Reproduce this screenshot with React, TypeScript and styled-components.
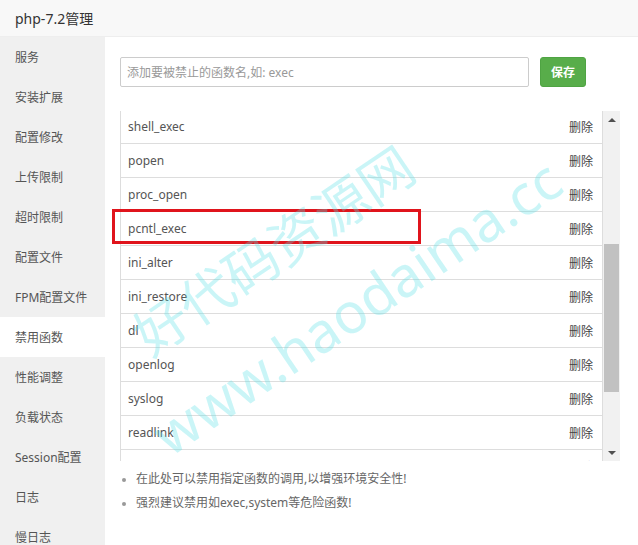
import { useEffect, useRef } from 'react';
import styled, { createGlobalStyle } from 'styled-components';

const ROW_HEIGHT = 34;
const VIEWPORT_HEIGHT = 350;
const ARROW_SIZE = 17;

const functions = [
  'passthru',
  'exec',
  'system',
  'putenv',
  'chroot',
  'chgrp',
  'chown',
  'proc_get_status',
  'shell_exec',
  'popen',
  'proc_open',
  'pcntl_exec',
  'ini_alter',
  'ini_restore',
  'dl',
  'openlog',
  'syslog',
  'readlink',
  'symlink',
  'popepassthru',
  'stream_socket_server',
  'fsocket',
];

const menu = [
  '服务',
  '安装扩展',
  '配置修改',
  '上传限制',
  '超时限制',
  '配置文件',
  'FPM配置文件',
  '禁用函数',
  '性能调整',
  '负载状态',
  'Session配置',
  '日志',
  '慢日志',
];

const GlobalStyle = createGlobalStyle`
  html, body {
    margin: 0;
    padding: 0;
    background: #fff;
  }
  body {
    font-family: "Noto Sans", "Noto Sans CJK SC", sans-serif;
    font-size: 12px;
    color: #555;
  }
  * {
    box-sizing: border-box;
  }
`;

const Window = styled.div`
  position: relative;
  width: 638px;
  height: 545px;
  overflow: hidden;
  display: flex;
  flex-direction: column;
  background: #fff;
`;

const Header = styled.div`
  height: 37px;
  flex: none;
  display: flex;
  align-items: center;
  padding: 0 15px 1px;
  background: #f8f8f8;
  border-bottom: 1px solid #eee;
  color: #333;
  font-size: 14px;
`;

const Body = styled.div`
  flex: 1;
  display: flex;
  min-height: 0;
`;

const Sidebar = styled.ul`
  width: 105px;
  flex: none;
  margin: 0;
  padding: 0;
  list-style: none;
  background: #f0f0f0;
`;

const MenuItem = styled.li<{ $active?: boolean }>`
  height: 40px;
  display: flex;
  align-items: center;
  padding-left: 15px;
  background: ${(p) => (p.$active ? '#fff' : 'transparent')};
  color: #555;
  white-space: nowrap;
`;

const Main = styled.div`
  flex: 1;
  padding: 20px 18px 0 15px;
  display: flex;
  flex-direction: column;
`;

const Toolbar = styled.div`
  display: flex;
  align-items: center;
  gap: 11px;
`;

const Input = styled.input`
  width: 409px;
  height: 30px;
  padding: 0 6px;
  border: 1px solid #ccc;
  border-radius: 2px;
  font: inherit;
  color: #555;
  outline: none;

  &::placeholder {
    color: #999;
  }
`;

const SaveButton = styled.button`
  width: 46px;
  height: 30px;
  border: 1px solid #4fa443;
  border-radius: 3px;
  background: #58ad4a;
  color: #fff;
  font: inherit;
  font-weight: 700;
  padding: 0;
`;

const ListViewport = styled.div`
  margin-top: 24px;
  width: 500px;
  height: ${VIEWPORT_HEIGHT}px;
  display: flex;
`;

const ListScroll = styled.div`
  flex: 1;
  overflow: hidden;
`;

const Table = styled.div`
  border: 1px solid #ddd;
  border-bottom: none;
`;

const Row = styled.div`
  height: ${ROW_HEIGHT}px;
  display: flex;
  align-items: center;
  justify-content: space-between;
  padding: 0 9px 0 7px;
  border-bottom: 1px solid #ddd;
  color: #555;
`;

const DeleteLink = styled.a`
  color: #444;
  cursor: pointer;
`;

const Scrollbar = styled.div`
  width: 17px;
  flex: none;
  display: flex;
  flex-direction: column;
  background: #f1f1f1;
`;

const ArrowButton = styled.div<{ $down?: boolean }>`
  height: ${ARROW_SIZE}px;
  flex: none;
  display: flex;
  align-items: center;
  justify-content: center;

  &::before {
    content: '';
    width: 0;
    height: 0;
    border-left: 4px solid transparent;
    border-right: 4px solid transparent;
    ${(p) =>
      p.$down ? 'border-top: 4px solid #505050;' : 'border-bottom: 4px solid #505050;'}
  }
`;

const Track = styled.div`
  flex: 1;
  padding: 0 1px;
`;

const Thumb = styled.div<{ $top: number; $height: number }>`
  margin-top: ${(p) => p.$top}px;
  height: ${(p) => p.$height}px;
  background: #c1c1c1;
`;

const Notes = styled.ul`
  margin: 6px 0 0;
  padding: 0 0 0 16px;
  color: #666;

  & li {
    height: 24px;
    line-height: 24px;
  }

  & li::marker {
    color: #999;
    font-size: 10px;
  }
`;

const Highlight = styled.div`
  position: absolute;
  left: 112px;
  top: 209px;
  width: 309px;
  height: 35px;
  border: 3px solid #e0141c;
  pointer-events: none;
`;

const Watermark = styled.div<{ $x: number; $y: number; $size: number }>`
  position: absolute;
  left: ${(p) => p.$x}px;
  top: ${(p) => p.$y}px;
  transform: translate(-50%, -50%) rotate(-34deg);
  white-space: nowrap;
  font-size: ${(p) => p.$size}px;
  font-family: "Noto Sans", "Noto Sans CJK SC", sans-serif;
  color: rgba(90, 225, 230, 0.32);
  pointer-events: none;
`;

const App = () => {
  const scrollRef = useRef<HTMLDivElement>(null);
  const scrollTop = 274;
  const contentHeight = functions.length * ROW_HEIGHT + 1;
  const trackLength = VIEWPORT_HEIGHT - ARROW_SIZE * 2;
  const thumbHeight = Math.round((trackLength * VIEWPORT_HEIGHT) / contentHeight);
  const thumbTop = Math.round((trackLength * scrollTop) / contentHeight);

  useEffect(() => {
    if (scrollRef.current) scrollRef.current.scrollTop = scrollTop;
  }, []);

  return (
    <Window>
      <GlobalStyle />
      <Header>php-7.2管理</Header>
      <Body>
        <Sidebar>
          {menu.map((item) => (
            <MenuItem key={item} $active={item === '禁用函数'}>
              {item}
            </MenuItem>
          ))}
        </Sidebar>
        <Main>
          <Toolbar>
            <Input placeholder="添加要被禁止的函数名,如: exec" />
            <SaveButton>保存</SaveButton>
          </Toolbar>
          <ListViewport>
            <ListScroll ref={scrollRef}>
              <Table>
                {functions.map((fn) => (
                  <Row key={fn}>
                    <span>{fn}</span>
                    <DeleteLink>删除</DeleteLink>
                  </Row>
                ))}
              </Table>
            </ListScroll>
            <Scrollbar>
              <ArrowButton />
              <Track>
                <Thumb $top={thumbTop} $height={thumbHeight} />
              </Track>
              <ArrowButton $down />
            </Scrollbar>
          </ListViewport>
          <Notes>
            <li>在此处可以禁用指定函数的调用,以增强环境安全性!</li>
            <li>强烈建议禁用如exec,system等危险函数!</li>
          </Notes>
        </Main>
      </Body>
      <Highlight />
      <Watermark $x={272} $y={248} $size={54}>
        好代码资源网
      </Watermark>
      <Watermark $x={356} $y={306} $size={56}>
        www.haodaima.cc
      </Watermark>
    </Window>
  );
};

export default App;
